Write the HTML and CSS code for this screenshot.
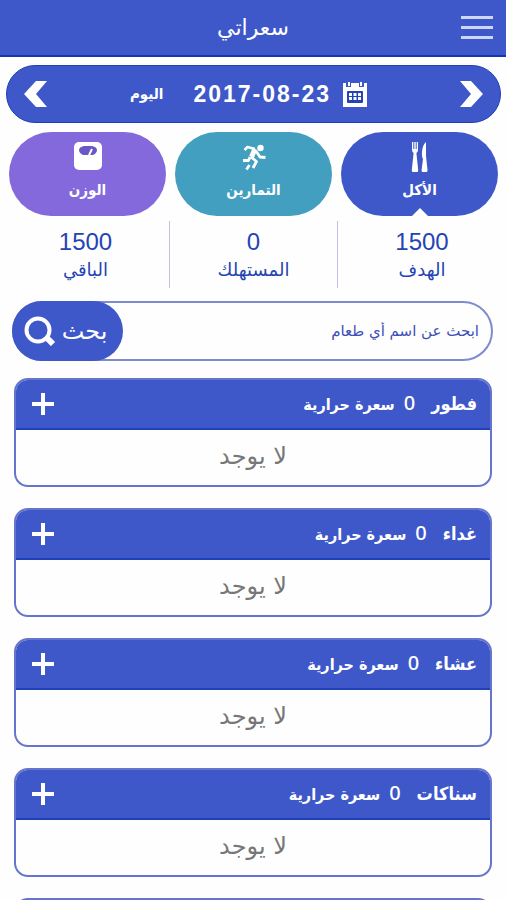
FILE: index.html
```html
<!DOCTYPE html>
<html lang="ar" dir="rtl">
<head>
    <meta charset="UTF-8">
    <meta name="viewport" content="width=device-width, initial-scale=1.0">
    <title>سعراتي</title>
    <link rel="stylesheet" href="styles.css">
</head>
<body>
    <header class="top-bar">
        <button class="menu-button" type="button" aria-label="القائمة">
            <span></span>
            <span></span>
            <span></span>
        </button>
        <h1>سعراتي</h1>
    </header>

    <main>
        <div class="date-bar">
            <button class="arrow" type="button" aria-label="السابق">
                <svg width="24" height="28" viewBox="0 0 24 28"><path d="M1 1H12L24 14L12 27H1L12 14Z" fill="#fff"/></svg>
            </button>
            <div class="date">
                <svg width="24" height="25" viewBox="0 0 24 25">
                    <path d="M0 1H3V5H8V1H16V5H21V1H24V25H0Z" fill="#fff"/>
                    <path d="M5 0H7V4H5ZM17 0H19V4H17Z" fill="#fff"/>
                    <rect x="4" y="9" width="16" height="12" rx="1" fill="#2443b4"/>
                    <path d="M6 11H9V14H6ZM10.500 11H13.500V14H10.500ZM15 11H18V14H15ZM6 15H9V18H6ZM10.500 15H13.500V18H10.500ZM15 15H18V18H15Z" fill="#fff"/>
                </svg>
                <time datetime="2017-08-23" dir="ltr">2017-08-23</time>
                <span class="today">اليوم</span>
            </div>
            <button class="arrow" type="button" aria-label="التالي">
                <svg width="24" height="28" viewBox="0 0 24 28"><path d="M23 1H12L0 14L12 27H23L12 14Z" fill="#fff"/></svg>
            </button>
        </div>

        <nav class="tabs">
            <a href="#food" class="tab food active">
                <svg width="32" height="32" viewBox="0 0 32 32" fill="#fff">
                    <path d="M8 2H9.300V9H10.300V2H11.700V9H12.700V2H14V10Q14 12 12.400 13L14.200 30Q14 33 11 33Q8 33 7.800 30L9.600 13Q8 12 8 10Z"/>
                    <path d="M22 2V16L23.500 30Q23.400 33 20.500 33Q17.500 33 17.600 30L19 19Q17.500 17 18 12Q18.500 5 22 2Z"/>
                </svg>
                <span>الأكل</span>
            </a>
            <a href="#sport" class="tab sport">
                <svg width="32" height="32" viewBox="0 0 32 32" fill="none" stroke="#fff" stroke-width="2.500" stroke-linejoin="round">
                    <circle cx="22.500" cy="8" r="3.200" fill="#fff" stroke="none"/>
                    <path d="M6.500 10L9.500 7L17 9"/>
                    <path d="M17 9L13.500 17" stroke-width="5"/>
                    <path d="M18 11L22 17L27.500 17.500M12 17L10.500 20.500H5M13 17L18.500 21.500L15 28M11.500 25L8.500 29.500" stroke-width="2.800"/>
                </svg>
                <span>التمارين</span>
            </a>
            <a href="#weight" class="tab weight">
                <svg width="32" height="32" viewBox="0 0 32 32">
                    <rect x="2" y="2" width="28" height="28" rx="5" fill="#fff"/>
                    <path d="M7 10Q7 7 12 6H20Q25 7 25 10Q25 13 21 15H11Q7 13 7 10Z" fill="#6a58c8"/>
                    <path d="M17 15L20 9" stroke="#fff" stroke-width="2"/>
                </svg>
                <span>الوزن</span>
            </a>
        </nav>

        <dl class="stats">
            <div><dd>1500</dd><dt>الهدف</dt></div>
            <div><dd>0</dd><dt>المستهلك</dt></div>
            <div><dd>1500</dd><dt>الباقي</dt></div>
        </dl>

        <form class="search">
            <input type="text" placeholder="ابحث عن اسم أي طعام" aria-label="ابحث عن اسم أي طعام">
            <button type="submit">
                <span>بحث</span>
                <svg width="32" height="30" viewBox="0 0 32 30" fill="none" stroke="#fff">
                    <circle cx="14" cy="14" r="11.500" stroke-width="4"/>
                    <path d="M22 21L29 28" stroke-width="6"/>
                </svg>
            </button>
        </form>

        <section class="meal">
            <header>
                <h2>فطور</h2>
                <p><b>0</b> سعرة حرارية</p>
                <button class="add" type="button" aria-label="إضافة"></button>
            </header>
            <p class="empty">لا يوجد</p>
        </section>

        <section class="meal">
            <header>
                <h2>غداء</h2>
                <p><b>0</b> سعرة حرارية</p>
                <button class="add" type="button" aria-label="إضافة"></button>
            </header>
            <p class="empty">لا يوجد</p>
        </section>

        <section class="meal">
            <header>
                <h2>عشاء</h2>
                <p><b>0</b> سعرة حرارية</p>
                <button class="add" type="button" aria-label="إضافة"></button>
            </header>
            <p class="empty">لا يوجد</p>
        </section>

        <section class="meal">
            <header>
                <h2>سناكات</h2>
                <p><b>0</b> سعرة حرارية</p>
                <button class="add" type="button" aria-label="إضافة"></button>
            </header>
            <p class="empty">لا يوجد</p>
        </section>

        <section class="meal">
            <header></header>
        </section>
    </main>
</body>
</html>
```

FILE: styles.css
```css
* {
    box-sizing: border-box;
}

body {
    margin: 0;
    background: #fefefe;
    color: #2443b4;
    font-family: "DejaVu Sans", sans-serif;
}

h1, h2, p, dl, dd {
    margin: 0;
}

button {
    padding: 0;
    border: none;
    background: none;
    color: white;
    font-family: inherit;
    cursor: pointer;
}

svg {
    display: block;
}

/* Header */
.top-bar {
    display: grid;
    grid-template-columns: 32px 1fr 32px;
    align-items: center;
    height: 57px;
    padding: 0 13px;
    background: #3e58c9;
    border-bottom: 2px solid #1238b0;
    color: white;
    text-align: center;
}

.top-bar h1 {
    font-size: 22px;
    font-weight: normal;
    line-height: 32px;
}

.menu-button {
    display: flex;
    flex-direction: column;
    gap: 7px;
}

.menu-button span {
    width: 32px;
    height: 3px;
    background: #cdd6f7;
}

/* Date */
.date-bar {
    display: flex;
    align-items: center;
    justify-content: space-between;
    height: 58px;
    margin: 8px 5px 0 6px;
    padding: 0 17px;
    background: #3e58c9;
    border: 1px solid #1f40b8;
    border-radius: 29px;
    color: white;
}

.date {
    display: flex;
    align-items: center;
    margin-right: 10px;
    font-weight: bold;
}

.date time {
    margin: 0 12px 0 30px;
    font-family: "Liberation Sans", sans-serif;
    font-size: 23px;
    letter-spacing: 2px;
}

.today {
    font-family: "DejaVu Sans Condensed", "DejaVu Sans", sans-serif;
    font-size: 15px;
}

/* Tabs */
.tabs {
    display: grid;
    grid-template-columns: repeat(3, 1fr);
    gap: 9px;
    margin: 9px 8px 0 9px;
}

.tab {
    position: relative;
    display: flex;
    flex-direction: column;
    align-items: center;
    height: 84px;
    padding-top: 8px;
    border-radius: 42px;
    color: white;
    font-family: "DejaVu Sans Condensed", "DejaVu Sans", sans-serif;
    font-size: 15px;
    font-weight: bold;
    line-height: 36px;
    text-decoration: none;
}

.food {
    background: #3e58c9;
}

.sport {
    background: #439fbf;
}

.weight {
    background: #8369db;
}

.tab.active::after {
    content: "";
    position: absolute;
    bottom: 0;
    left: 50%;
    border: 8px solid transparent;
    border-top: none;
    border-bottom-color: #fefefe;
    transform: translateX(-50%);
}

/* Totals */
.stats {
    display: grid;
    grid-template-columns: repeat(3, 1fr);
    margin: 5px 0 0 2px;
    text-align: center;
}

.stats div {
    display: flex;
    flex-direction: column;
    height: 67px;
    padding-top: 6px;
}

.stats div + div {
    border-right: 1px solid #c3bfee;
}

.stats dd {
    font-family: "Liberation Sans", sans-serif;
    font-size: 24px;
    line-height: 29px;
}

.stats dt {
    font-size: 18px;
    line-height: 28px;
}

/* Search */
.search {
    display: flex;
    height: 60px;
    margin: 13px 13px 17px 12px;
    border: 2px solid #7f8bd0;
    border-radius: 30px;
}

.search input {
    flex: 1;
    min-width: 0;
    padding: 0 12px;
    border: none;
    outline: none;
    background: none;
    color: #2443b4;
    font-family: inherit;
    font-size: 15px;
}

.search input::placeholder {
    color: #3e4fb8;
    opacity: 1;
}

.search button {
    display: flex;
    align-items: center;
    justify-content: center;
    gap: 6px;
    width: 111px;
    margin: -2px 0 -2px -2px;
    padding-left: 4px;
    padding-right: 8px;
    border-radius: 30px;
    background: #3e58c9;
    font-size: 24px;
}

/* Meals */
.meal {
    height: 109px;
    margin: 0 14px 21px;
    border: 2px solid #6575cb;
    border-radius: 14px;
    overflow: hidden;
}

.meal header {
    display: flex;
    align-items: center;
    height: 50px;
    padding: 0 13px 0 16px;
    background: #3e58c9;
    border-bottom: 2px solid #1f40b8;
    color: white;
    font-family: "DejaVu Sans Condensed", "DejaVu Sans", sans-serif;
    line-height: 32px;
}

.meal h2 {
    margin-left: 16px;
    font-size: 18px;
}

.meal header p {
    font-size: 16px;
    font-weight: bold;
}

.meal b {
    margin-left: 4px;
    font-family: "Noto Sans", sans-serif;
    font-size: 20px;
    font-weight: 500;
}

.add {
    width: 22px;
    height: 22px;
    margin-right: auto;
    background: linear-gradient(white, white) center / 22px 4px no-repeat,
        linear-gradient(white, white) center / 4px 22px no-repeat;
}

.empty {
    color: #777;
    font-size: 24px;
    line-height: 52px;
    text-align: center;
}
```
